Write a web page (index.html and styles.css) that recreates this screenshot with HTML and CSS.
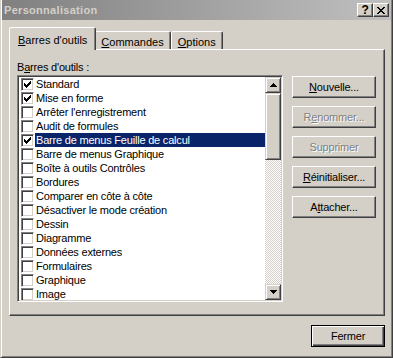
FILE: index.html
```html
<!DOCTYPE html>
<html lang="fr">
<head>
    <meta charset="UTF-8">
    <title>Personnalisation</title>
    <link rel="stylesheet" href="styles.css">
</head>
<body>
    <div class="window">
        <div class="titlebar">
            <span class="title">Personnalisation</span>
            <div class="title-buttons">
                <span class="tbtn help">?</span>
                <span class="tbtn">
                    <svg width="8" height="7" viewBox="0 0 8 7"><path d="M0 0h2v1h-2z M6 0h2v1h-2z M1 1h2v1h-2z M5 1h2v1h-2z M2 2h4v1h-4z M3 3h2v1h-2z M2 4h4v1h-4z M1 5h2v1h-2z M5 5h2v1h-2z M0 6h2v1h-2z M6 6h2v1h-2z" fill="#000"/></svg>
                </span>
            </div>
        </div>

        <div class="tabs">
            <div class="tab active"><u>B</u>arres d'outils</div>
            <div class="tab"><u>C</u>ommandes</div>
            <div class="tab"><u>O</u>ptions</div>
        </div>

        <div class="panel">
            <div class="list-col">
                <div class="label">B<u>a</u>rres d'outils :</div>
                <div class="listbox">
                    <ul class="items">
                        <li class="item"><span class="check on"></span><span class="text">Standard</span></li>
                        <li class="item"><span class="check on"></span><span class="text">Mise en forme</span></li>
                        <li class="item"><span class="check"></span><span class="text">Arrêter l'enregistrement</span></li>
                        <li class="item"><span class="check"></span><span class="text">Audit de formules</span></li>
                        <li class="item selected"><span class="check on"></span><span class="text">Barre de menus Feuille de calcul</span></li>
                        <li class="item"><span class="check"></span><span class="text">Barre de menus Graphique</span></li>
                        <li class="item"><span class="check"></span><span class="text">Boîte à outils Contrôles</span></li>
                        <li class="item"><span class="check"></span><span class="text">Bordures</span></li>
                        <li class="item"><span class="check"></span><span class="text">Comparer en côte à côte</span></li>
                        <li class="item"><span class="check"></span><span class="text">Désactiver le mode création</span></li>
                        <li class="item"><span class="check"></span><span class="text">Dessin</span></li>
                        <li class="item"><span class="check"></span><span class="text">Diagramme</span></li>
                        <li class="item"><span class="check"></span><span class="text">Données externes</span></li>
                        <li class="item"><span class="check"></span><span class="text">Formulaires</span></li>
                        <li class="item"><span class="check"></span><span class="text">Graphique</span></li>
                        <li class="item"><span class="check"></span><span class="text">Image</span></li>
                    </ul>
                    <div class="scrollbar">
                        <div class="sb-btn">
                            <svg width="7" height="4" viewBox="0 0 7 4"><path d="M3 0h1v1h1v1h1v1h1v1h-7v-1h1v-1h1v-1h1z" fill="#000"/></svg>
                        </div>
                        <div class="sb-thumb"></div>
                        <div class="sb-track"></div>
                        <div class="sb-btn">
                            <svg width="7" height="4" viewBox="0 0 7 4"><path d="M0 0h7v1h-1v1h-1v1h-1v1h-1v-1h-1v-1h-1v-1h-1z" fill="#000"/></svg>
                        </div>
                    </div>
                </div>
            </div>

            <div class="actions">
                <button class="btn"><u>N</u>ouvelle...</button>
                <button class="btn" disabled>R<u>e</u>nommer...</button>
                <button class="btn" disabled>Supprimer</button>
                <button class="btn"><u>R</u>éinitialiser...</button>
                <button class="btn">A<u>t</u>tacher...</button>
            </div>
        </div>

        <div class="footer">
            <button class="btn default">Fermer</button>
        </div>
    </div>
</body>
</html>
```

FILE: styles.css
```css
body {
    margin: 0;
    font-family: "Liberation Sans", Arial, sans-serif;
    font-size: 11px;
    letter-spacing: -0.2px;
    color: #000;
}
.window {
    box-sizing: border-box;
    width: 393px;
    height: 358px;
    background-color: #d4d0c8;
    border-left: 1px solid #d4d0c8;
    border-right: 1px solid #404040;
    border-bottom: 1px solid #404040;
    padding: 0 1px 1px 1px;
    box-shadow: inset 1px 0 #fff, inset -1px -1px #808080;
}

/* barre de titre */
.titlebar {
    height: 20px;
    display: flex;
    align-items: center;
    justify-content: space-between;
    padding: 0 2px 0 2px;
    background: linear-gradient(to right, #808080, #c0c0c0);
}
.title {
    color: #d4d0c8;
    font-weight: bold;
    letter-spacing: 0.3px;
}
.title-buttons {
    display: flex;
}
.tbtn {
    box-sizing: border-box;
    width: 16px;
    height: 14px;
    display: flex;
    align-items: center;
    justify-content: center;
    background-color: #d4d0c8;
    border: 1px solid;
    border-color: #fff #404040 #404040 #fff;
    box-shadow: inset -1px -1px #808080;
}
.tbtn.help {
    font-weight: bold;
    font-size: 12px;
    line-height: 12px;
}

/* onglets */
.tabs {
    box-sizing: border-box;
    height: 29px;
    display: flex;
    align-items: flex-end;
    padding: 7px 0 0 9px;
    position: relative;
    z-index: 1;
}
.tab {
    box-sizing: border-box;
    height: 18px;
    padding: 3px 6px 0;
    line-height: 14px;
    letter-spacing: 0;
    border: 1px solid;
    border-bottom: none;
    border-color: #fff #404040 transparent #fff;
    box-shadow: inset -1px 0 #808080;
    border-radius: 2px 2px 0 0;
    background-color: #d4d0c8;
}
.tab.active {
    height: 23px;
    padding: 5px 8px 0;
    margin: 0 -2px -1px;
    position: relative;
    z-index: 2;
}

/* panneau */
.panel {
    box-sizing: border-box;
    width: 376px;
    height: 267px;
    margin-left: 7px;
    display: flex;
    gap: 9px;
    padding: 10px 0 0 7px;
    border: 1px solid;
    border-color: #fff #404040 #404040 #fff;
    box-shadow: inset -1px -1px #808080;
}
.label {
    line-height: 14px;
    height: 15px;
}
.listbox {
    box-sizing: border-box;
    width: 266px;
    height: 227px;
    display: flex;
    padding: 1px;
    background-color: #fff;
    border: 1px solid;
    border-color: #808080 #fff #fff #808080;
    box-shadow: inset 1px 1px #404040, inset -1px -1px #d4d0c8;
    overflow: hidden;
}
.items {
    flex: 1;
    margin: 0;
    padding: 0;
    list-style: none;
    overflow: hidden;
}
.item {
    height: 14px;
    display: flex;
    align-items: flex-start;
    padding-left: 2px;
}
.check {
    box-sizing: border-box;
    width: 13px;
    height: 13px;
    margin-top: 1px;
    flex: none;
    background-color: #fff;
    border: 1px solid;
    border-color: #808080 #fff #fff #808080;
    box-shadow: inset 1px 1px #404040, inset -1px -1px #d4d0c8;
}
.check.on {
    background: #fff url("data:image/svg+xml,%3Csvg xmlns='http://www.w3.org/2000/svg' width='7' height='7' viewBox='0 0 7 7'%3E%3Cpath d='M0 2h1v1h1v1h1v-1h1v-1h1v-1h1v-1h1v3h-1v1h-1v1h-1v1h-1v1h-1v-1h-1v-1h-1z' fill='%23000'/%3E%3C/svg%3E") no-repeat 2px 2px;
}
.text {
    flex: 1;
    margin-left: 1px;
    padding-left: 1px;
    line-height: 14px;
    white-space: nowrap;
}
.item.selected .text {
    background-color: #0a246a;
    color: #fff;
}

/* barre de defilement */
.scrollbar {
    width: 16px;
    display: flex;
    flex-direction: column;
}
.sb-btn, .sb-thumb {
    box-sizing: border-box;
    background-color: #d4d0c8;
    border: 1px solid;
    border-color: #d4d0c8 #404040 #404040 #d4d0c8;
    box-shadow: inset 1px 1px #fff, inset -1px -1px #808080;
}
.sb-btn {
    height: 16px;
    display: flex;
    align-items: center;
    justify-content: center;
}
.sb-thumb {
    height: 67px;
}
.sb-track {
    flex: 1;
    background: repeating-conic-gradient(#d4d0c8 0 25%, #fff 0 50%) 0 0 / 2px 2px;
}

/* boutons */
.actions {
    display: flex;
    flex-direction: column;
    gap: 8px;
    margin-top: 16px;
}
.btn {
    box-sizing: border-box;
    width: 84px;
    height: 22px;
    padding: 0;
    font-family: inherit;
    font-size: 11px;
    letter-spacing: -0.2px;
    color: #000;
    background-color: #d4d0c8;
    border: 1px solid;
    border-color: #fff #404040 #404040 #fff;
    box-shadow: inset -1px -1px #808080;
    border-radius: 0;
}
.btn:disabled {
    color: #808080;
    text-shadow: 1px 1px #fff;
}
.footer {
    display: flex;
    justify-content: flex-end;
    padding: 9px 6px 0 0;
}
.btn.default {
    width: 74px;
    border-color: #000;
    box-shadow: inset 1px 1px #fff, inset -1px -1px #404040, inset -2px -2px #808080;
}
```
